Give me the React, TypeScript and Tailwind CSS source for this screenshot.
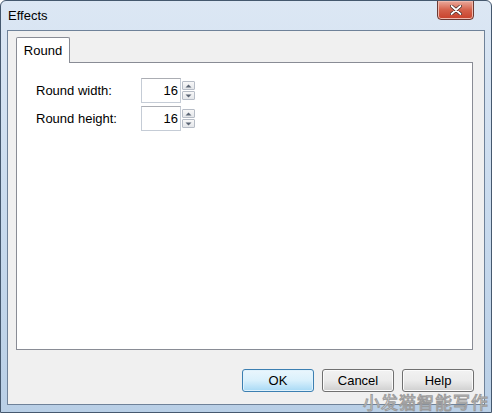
import React from "react";

function Spin({ value }: { value: string }) {
  return (
    <div className="flex items-center">
      <div className="w-[40px] h-[25px] bg-white border border-[#c5ccd6] border-t-[#abadb3] flex items-center justify-end pr-[2px] text-[13px] text-black">
        {value}
      </div>
      <div className="flex flex-col ml-[1px] gap-[1px]">
        <div className="w-[13px] h-[9px] border border-[#b6bcc6] rounded-[1px] bg-gradient-to-b from-[#f8f8f8] to-[#e4e6ea] flex items-center justify-center">
          <svg width="7" height="4" viewBox="0 0 7 4"><path d="M0.5 3.5 L3.5 0.5 L6.5 3.5 Z" fill="#5b6574" /></svg>
        </div>
        <div className="w-[13px] h-[9px] border border-[#b6bcc6] rounded-[1px] bg-gradient-to-b from-[#f8f8f8] to-[#e4e6ea] flex items-center justify-center">
          <svg width="7" height="4" viewBox="0 0 7 4"><path d="M0.5 0.5 L3.5 3.5 L6.5 0.5 Z" fill="#5b6574" /></svg>
        </div>
      </div>
    </div>
  );
}

function Btn({ label, primary }: { label: string; primary?: boolean }) {
  return (
    <div
      className={
        primary
          ? "w-[72px] h-[23px] rounded-[3px] border border-[#3c7fb1] bg-gradient-to-b from-[#eaf6fd] via-[#d9f0fc] to-[#a7d9f5] flex items-center justify-center text-[13px] text-black shadow-[inset_0_0_0_1px_#e0f2fc]"
          : "w-[72px] h-[23px] rounded-[3px] border border-[#707070] bg-gradient-to-b from-[#f2f2f2] via-[#ebebeb] to-[#cfcfcf] flex items-center justify-center text-[13px] text-black shadow-[inset_0_0_0_1px_#fbfbfb]"
      }
    >
      {label}
    </div>
  );
}

export default function App() {
  return (
    <div
      className="relative w-[492px] h-[413px] overflow-hidden rounded-t-[6px] border border-[#45586e] bg-gradient-to-b from-[#dce7f4] via-[#c9dbee] to-[#b9cfe6] flex flex-col"
      style={{ fontFamily: '"Liberation Sans", Arial, sans-serif' }}
    >
      {/* title bar */}
      <div className="h-[29px] flex items-start justify-between pl-[7px] pr-[17px]">
        <div className="text-[13px] text-black mt-[5px]">Effects</div>
        <div className="w-[37px] h-[20px] -mt-[1px] rounded-b-[4px] border border-[#6b3a34] bg-gradient-to-b from-[#e9a99c] via-[#d4604a] to-[#c8402a] flex items-center justify-center shadow-[inset_0_0_0_1px_#f0b8ac]">
          <svg width="12" height="10" viewBox="0 0 12 10">
            <path d="M1.5 1 L10.5 9 M10.5 1 L1.5 9" stroke="#3a2320" strokeWidth="3.2" strokeLinecap="round" />
            <path d="M1.5 1 L10.5 9 M10.5 1 L1.5 9" stroke="#ffffff" strokeWidth="1.8" strokeLinecap="round" />
          </svg>
        </div>
      </div>

      {/* client */}
      <div className="flex-1 mx-[6px] mb-[7px] border border-[#6f8299] bg-[#f0f0f0] flex flex-col pl-[8px] pr-[10px] pt-[6px]">
        <div className="flex h-[25px]">
          <div className="w-[54px] h-[26px] bg-white border border-[#898c95] border-b-0 rounded-t-[2px] flex items-center justify-center text-[13px] text-black z-10">
            Round
          </div>
        </div>
        <div className="w-[457px] h-[288px] bg-white border border-[#898c95] pl-[19px] pt-[15px] flex flex-col gap-[3px]">
          <div className="flex items-center">
            <div className="w-[105px] text-[13px] text-black">Round width:</div>
            <Spin value="16" />
          </div>
          <div className="flex items-center">
            <div className="w-[105px] text-[13px] text-black">Round height:</div>
            <Spin value="16" />
          </div>
        </div>
        <div className="flex justify-end gap-[8px] mt-[19px]">
          <Btn label="OK" primary />
          <Btn label="Cancel" />
          <Btn label="Help" />
        </div>
      </div>

      {/* watermark */}
      <div
        className="absolute right-[2px] bottom-0 text-[17px] leading-[20px] tracking-[1px] text-white/70 pointer-events-none"
        style={{ fontFamily: '"Noto Sans CJK SC", sans-serif', WebkitTextStroke: "1px #9a9a9a" }}
      >
        小发猫智能写作
      </div>
    </div>
  );
}
